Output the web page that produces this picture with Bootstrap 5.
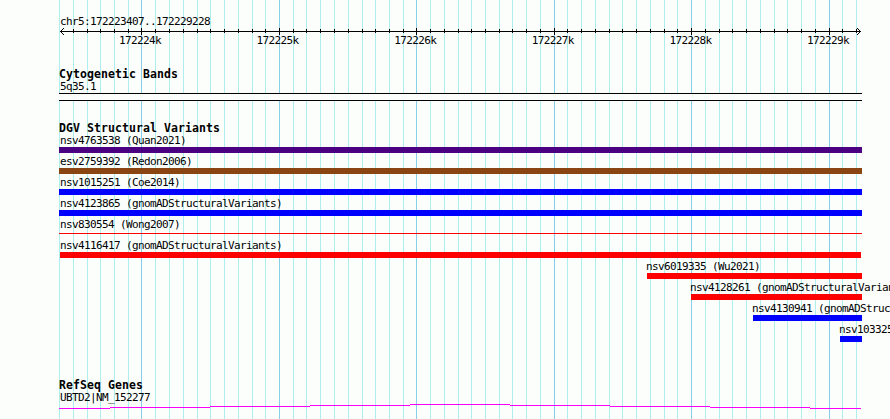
<!DOCTYPE html>
<html lang="en">
<head>
<meta charset="utf-8">
<meta name="viewport" content="width=device-width, initial-scale=1">
<title>chr5:172223407..172229228</title>
<link href="https://cdn.jsdelivr.net/npm/bootstrap@5.3.0/dist/css/bootstrap.min.css" rel="stylesheet">
<style>
body{background:#fcfefc;color:#000;font:11px/13px "DejaVu Sans Mono",monospace;letter-spacing:-.622px}
.browser{width:890px;height:419px;padding-top:15px}
.grid-lines{z-index:0}
.tracks{z-index:1;padding-left:59px}
.caption{height:13px;padding-left:1px}
.ruler{height:7px;overflow:visible}
.scale{height:13px;margin-left:60px;gap:95.6px;margin-top:-1px}
.scale span{width:42px;flex:none}
.heading{font-size:11.5px;font-weight:700;letter-spacing:.077px;height:12px;line-height:13px}
.band{width:803px;height:8px;border:solid #000;border-width:1px 0;background:#fcfefc}
.feature{height:21px}
.bar{height:6px;width:803px}
.thin{height:1px;margin-top:2px}
.shift{margin-left:-2px}
.cyto{margin-top:21px}
.dgv{margin-top:21px}
.refseq{margin-top:35px}
.indigo{background:#4b0082}.brown{background:#8b4513}.blue{background:#00f}.red{background:#f00}
.x60{margin-left:1px;width:801px}
.f647{margin-left:588px}.f691{margin-left:632px}.f753{margin-left:694px}.f840{margin-left:781px}
.f647 .bar{width:215px}.f691 .bar{width:171px}.f753 .bar{width:109px}.f840 .bar{width:22px}
</style>
<script src="https://cdn.jsdelivr.net/npm/bootstrap@5.3.0/dist/js/bootstrap.bundle.min.js"></script>
</head>
<body class="m-0 overflow-hidden">
<main class="browser position-relative overflow-hidden text-nowrap">
  <svg class="grid-lines position-absolute top-0 start-0" width="890" height="419" shape-rendering="crispEdges" fill="none" aria-hidden="true">
    <path stroke="#afeeee" d="M59.5 0v419M73.5 0v419M87.5 0v419M100.5 0v419M114.5 0v419M128.5 0v419M155.5 0v419M169.5 0v419M183.5 0v419M197.5 0v419M210.5 0v419M224.5 0v419M238.5 0v419M252.5 0v419M265.5 0v419M293.5 0v419M306.5 0v419M320.5 0v419M334.5 0v419M348.5 0v419M362.5 0v419M375.5 0v419M389.5 0v419M403.5 0v419M430.5 0v419M444.5 0v419M458.5 0v419M471.5 0v419M485.5 0v419M499.5 0v419M512.5 0v419M526.5 0v419M540.5 0v419M567.5 0v419M581.5 0v419M595.5 0v419M609.5 0v419M622.5 0v419M636.5 0v419M650.5 0v419M664.5 0v419M677.5 0v419M705.5 0v419M719.5 0v419M732.5 0v419M746.5 0v419M760.5 0v419M774.5 0v419M787.5 0v419M801.5 0v419M815.5 0v419M842.5 0v419M856.5 0v419"/>
    <path stroke="#87ceeb" d="M141.5 0v419M279.5 0v419M416.5 0v419M554.5 0v419M691.5 0v419M829.5 0v419"/>
  </svg>
  <div class="tracks position-relative">
    <div class="caption">chr5:172223407..172229228</div>
    <svg class="ruler d-block" width="803" viewBox="59 28 803 7" shape-rendering="crispEdges" fill="none" stroke="#000" aria-hidden="true">
      <path d="M60 31.5h801"/>
      <path d="M73.5 29v4M87.5 29v4M100.5 29v4M114.5 29v4M128.5 29v4M155.5 29v4M169.5 29v4M183.5 29v4M197.5 29v4M210.5 29v4M224.5 29v4M238.5 29v4M252.5 29v4M265.5 29v4M293.5 29v4M306.5 29v4M320.5 29v4M334.5 29v4M348.5 29v4M362.5 29v4M375.5 29v4M389.5 29v4M403.5 29v4M430.5 29v4M444.5 29v4M458.5 29v4M471.5 29v4M485.5 29v4M499.5 29v4M512.5 29v4M526.5 29v4M540.5 29v4M567.5 29v4M581.5 29v4M595.5 29v4M609.5 29v4M622.5 29v4M636.5 29v4M650.5 29v4M664.5 29v4M677.5 29v4M705.5 29v4M719.5 29v4M732.5 29v4M746.5 29v4M760.5 29v4M774.5 29v4M787.5 29v4M801.5 29v4M815.5 29v4M842.5 29v4M856.5 29v4"/>
      <path d="M141.5 28v7M279.5 28v7M416.5 28v7M554.5 28v7M691.5 28v7M829.5 28v7"/>
      <path fill="#000" stroke="none" d="M61 30h1v1h-1zM62 29h1v1h-1zM63 28h1v1h-1zM61 32h1v1h-1zM62 33h1v1h-1zM63 34h1v1h-1zM859 30h1v1h-1zM858 29h1v1h-1zM857 28h1v1h-1zM859 32h1v1h-1zM858 33h1v1h-1zM857 34h1v1h-1z"/>
    </svg>
    <div class="scale d-flex"><span>172224k</span><span>172225k</span><span>172226k</span><span>172227k</span><span>172228k</span><span>172229k</span></div>

    <section class="cyto">
      <div class="heading">Cytogenetic Bands</div>
      <div class="caption">5q35.1</div>
      <div class="band"></div>
    </section>

    <section class="dgv">
      <div class="heading">DGV Structural Variants</div>
      <div class="feature"><div class="caption">nsv4763538 (Quan2021)</div><div class="bar indigo"></div></div>
      <div class="feature"><div class="caption">esv2759392 (Redon2006)</div><div class="bar brown"></div></div>
      <div class="feature"><div class="caption">nsv1015251 (Coe2014)</div><div class="bar blue"></div></div>
      <div class="feature"><div class="caption">nsv4123865 (gnomADStructuralVariants)</div><div class="bar blue"></div></div>
      <div class="feature"><div class="caption">nsv830554 (Wong2007)</div><div class="bar thin red"></div></div>
      <div class="feature"><div class="caption">nsv4116417 (gnomADStructuralVariants)</div><div class="bar red x60"></div></div>
      <div class="feature f647"><div class="caption shift">nsv6019335 (Wu2021)</div><div class="bar red"></div></div>
      <div class="feature f691"><div class="caption shift">nsv4128261 (gnomADStructuralVariants)</div><div class="bar red"></div></div>
      <div class="feature f753"><div class="caption shift">nsv4130941 (gnomADStructuralVariants)</div><div class="bar blue"></div></div>
      <div class="feature f840"><div class="caption shift">nsv1033251 (Coe2014)</div><div class="bar blue"></div></div>
    </section>

    <section class="refseq">
      <div class="heading">RefSeq Genes</div>
      <div class="caption">UBTD2|NM_152277</div>
      <svg class="d-block" width="803" height="15" viewBox="59 404 803 15" shape-rendering="crispEdges" fill="none" stroke="#f0f" aria-hidden="true">
        <path d="M59 408.5h51M110 407.5h100M210 406.5h100M310 405.5h100M410 404.5h100M510 405.5h100M610 406.5h100M710 407.5h100M810 408.5h51"/>
      </svg>
    </section>
  </div>
</main>
</body>
</html>
